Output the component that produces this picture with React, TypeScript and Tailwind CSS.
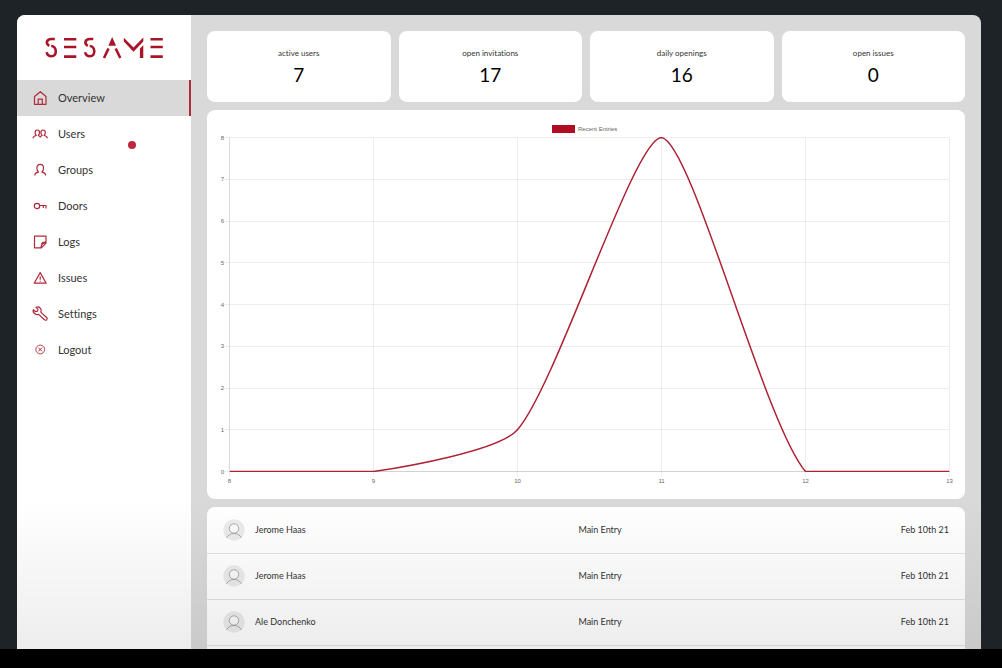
import React from "react";

const RED = "#a91427";

function Icon({ children }: { children: React.ReactNode }) {
  return (
    <svg
      viewBox="0 0 16 16"
      className="h-4 w-4 shrink-0 overflow-visible"
      fill="none"
      stroke="#b02a3a"
      strokeWidth="1.2"
      strokeLinejoin="round"
      aria-hidden="true"
    >
      {children}
    </svg>
  );
}

const navItems: { label: string; icon: React.ReactNode }[] = [
  {
    label: "Overview",
    icon: <path d="M2.500 14.300V6.500L8.300 1.700l5.700 4.800v7.800h-3.700V9.200H6.200v5.100zM6.200 14.300h4.100" />,
  },
  {
    label: "Users",
    icon: (
      <path d="M1 12.200c.1-1.700 1-2.200 3.300-2.700-.9-1.100-1.200-2-1.200-3.100 0-1.600.9-2.400 2.200-2.400s2.200.8 2.200 2.400c0 1.100-.3 2-1.200 3.100.9.300 1.500.8 1.900 1.600.4-.8 1-1.300 1.900-1.600-.9-1.100-1.200-2-1.200-3.100 0-1.600.9-2.400 2.200-2.400s2.200.8 2.200 2.400c0 1.100-.3 2-1.200 3.100 2.300.5 3.200 1 3.300 2.700" />
    ),
  },
  {
    label: "Groups",
    icon: (
      <path d="M2.800 13.400c0-2 1-2.700 3.700-3.200-1.200-1.200-1.600-2.600-1.600-4.200 0-2.400 1.400-3.700 3.300-3.700s3.300 1.300 3.300 3.700c0 1.600-.4 3-1.600 4.200 2.700.5 3.700 1.200 3.700 3.200" />
    ),
  },
  {
    label: "Doors",
    icon: (
      <>
        <circle cx="5" cy="8" r="2.700" />
        <path d="M7.700 7.500H14V10.500M11.300 7.500v2.500" />
      </>
    ),
  },
  {
    label: "Logs",
    icon: <path d="M2.500 2.200H14v7L9.400 13.800H2.500zM14 8.200c-2.600-.2-4.500.6-4.300 2.400M14 8.400c-3 .6-5 2-5 5.200" />,
  },
  {
    label: "Issues",
    icon: <path d="M8.200 2.600 14.200 13.200h-12zM8.200 6.400v3.400M8.200 10.700v1" />,
  },
  {
    label: "Settings",
    icon: (
      <path d="M1.300 3.700 3.600 5.700l1.900-.5.500-1.900L3.900 1.200c1.800-.7 4-.1 4.900 1.700.5 1 .4 2.200 0 3.200l5.800 5.400c.7.700.7 1.700.1 2.300s-1.600.6-2.300-.1L6.600 8.400c-1.200.5-2.600.3-3.700-.6C1.300 6.700.8 5.200 1.300 3.700z" />
    ),
  },
  {
    label: "Logout",
    icon: (
      <>
        <circle cx="8.200" cy="7.500" r="4.400" strokeWidth="0.900" />
        <path d="m6.400 5.700 3.600 3.600m0-3.600L6.400 9.300" strokeWidth="1" />
      </>
    ),
  },
];

function Logo() {
  const s =
    "M9.800 2H6.400C1.400 2 .4 6.800 4.300 8.800M6.200 9C11.900 9 12.600 19.300 6.500 19.300 4 19.300 2.200 18 1.600 15.300";
  return (
    <svg
      viewBox="0 0 118 22"
      className="h-[22px] w-[118px]"
      role="img"
      aria-label="Sesame"
      fill="none"
      stroke={RED}
      strokeWidth="2.600"
    >
      <path d={s} />
      <path d="M19 2.300h12.300M19 10h12.300M19 19.600h12.300" />
      <path d={s} transform="translate(38.500 0)" />
      <path d="M63.500 11.500 59 21M70.700 11.500 75.300 21" />
      <path d="M67.200 0 71 8.700h-7.600z" fill={RED} stroke="none" />
      <path d="M78.800.8V4.600L88.500 14.800 98.300 4.600V.5L88.500 10.600zM94.900 11.600 98.300 8.200V21h-3.400z" fill={RED} stroke="none" />
      <path d="M105.500 2.300h12.300M105.500 10h12.300M105.500 19.600h12.300" />
    </svg>
  );
}

const stats = [
  { label: "active users", value: 7 },
  { label: "open invitations", value: 17 },
  { label: "daily openings", value: 16 },
  { label: "open issues", value: 0 },
];

const hours = [8, 9, 10, 11, 12, 13];
const entries = [0, 0, 1, 8, 0, 0];
const LEFT = 22.5;
const TOP = 27.5;
const BOTTOM = 361.5;
const STEP_X = 144;
const STEP_Y = (BOTTOM - TOP) / 8;
const RIGHT = LEFT + STEP_X * 5;
const TENSION = 0.2;

function curvePath() {
  const pts = entries.map((v, i) => ({ x: LEFT + i * STEP_X, y: BOTTOM - v * STEP_Y }));
  const clamp = (y: number) => Math.min(BOTTOM, Math.max(TOP, y));
  const controls = pts.map((p, i) => {
    const a = pts[i - 1] ?? p;
    const b = pts[i + 1] ?? p;
    const d1 = Math.hypot(p.x - a.x, p.y - a.y);
    const d2 = Math.hypot(b.x - p.x, b.y - p.y);
    const f1 = (TENSION * d1) / (d1 + d2);
    const f2 = (TENSION * d2) / (d1 + d2);
    return {
      inn: [p.x - f1 * (b.x - a.x), clamp(p.y - f1 * (b.y - a.y))],
      out: [p.x + f2 * (b.x - a.x), clamp(p.y + f2 * (b.y - a.y))],
    };
  });
  return pts
    .map((p, i) => (i === 0 ? `M${p.x} ${p.y}` : `C${controls[i - 1].out} ${controls[i].inn} ${p.x} ${p.y}`))
    .join("");
}

function EntriesChart() {
  return (
    <svg viewBox="0 0 758 389" className="block h-auto w-full" role="img" aria-label="Recent Entries">
      <defs>
        <clipPath id="plot">
          <rect x={LEFT} y={TOP - 1} width={RIGHT - LEFT} height={BOTTOM - TOP + 1.5} />
        </clipPath>
      </defs>
      <g stroke="#ededed" strokeWidth="1">
        {Array.from({ length: 9 }, (_, v) => (
          <path key={v} d={`M${LEFT - 5} ${Math.floor(BOTTOM - v * STEP_Y) + 0.5}H${RIGHT}`} />
        ))}
        {hours.map((h, i) => (
          <path key={h} d={`M${LEFT + i * STEP_X} ${TOP}V${BOTTOM + 5}`} />
        ))}
      </g>
      <path d={`M${LEFT} ${TOP}V${BOTTOM}`} stroke="#dadada" />
      <path d={`M${LEFT} ${BOTTOM}H${RIGHT}`} stroke="#d2d2d2" />
      <path d={curvePath()} fill="none" stroke="#ad2335" strokeWidth="1.500" clipPath="url(#plot)" />
      <g fontSize="6" fill="#666" className="font-['Liberation_Sans',sans-serif]">
        {Array.from({ length: 9 }, (_, v) => (
          <text key={v} x="17" y={BOTTOM - v * STEP_Y + 2} textAnchor="end">
            {v}
          </text>
        ))}
        {hours.map((h, i) => (
          <text key={h} x={LEFT + i * STEP_X} y="373" textAnchor="middle">
            {h}
          </text>
        ))}
        <rect x="345" y="15" width="23" height="8" fill="#b00d23" />
        <text x="371" y="21">
          Recent Entries
        </text>
      </g>
    </svg>
  );
}

const log = [
  { name: "Jerome Haas", door: "Main Entry", date: "Feb 10th 21" },
  { name: "Jerome Haas", door: "Main Entry", date: "Feb 10th 21" },
  { name: "Ale Donchenko", door: "Main Entry", date: "Feb 10th 21" },
  { name: "", door: "", date: "" },
];

function Avatar() {
  return (
    <svg
      viewBox="0 0 22 22"
      className="h-[22px] w-[22px] shrink-0"
      fill="none"
      stroke="#999"
      strokeWidth="0.800"
      aria-hidden="true"
    >
      <circle cx="11" cy="11" r="10.700" fill="#ebebeb" stroke="none" />
      <circle cx="11" cy="9.500" r="4.700" fill="#fafafa" />
      <path d="M3.500 18.800c1.500-2.500 4.200-4.400 7.500-4.400s6 1.900 7.500 4.400" />
    </svg>
  );
}

export default function App() {
  return (
    <div className="flex h-screen flex-col bg-black font-[Lato,sans-serif] text-[#333] [font-variant-ligatures:none]">
      <div className="flex min-h-0 flex-1 bg-[#1e2327] pt-[15px] pr-[21px] pl-[17px]">
        <div className="relative flex min-w-0 flex-1 overflow-hidden rounded-t-lg bg-[#d9d9d9]">
          <aside className="w-[174px] shrink-0 bg-white">
            <div className="flex h-[65px] items-center justify-center">
              <Logo />
            </div>
            <nav>
              {navItems.map((item, i) => (
                <a
                  key={item.label}
                  href={`#${item.label.toLowerCase()}`}
                  aria-current={i === 0 ? "page" : undefined}
                  className={
                    i === 0
                      ? "flex h-9 items-center gap-[10px] border-r-2 border-[#b02a3a] bg-[#d9d9d9] pl-[15px] text-[11px]"
                      : "flex h-9 items-center gap-[10px] pl-[15px] text-[11px]"
                  }
                >
                  <Icon>{item.icon}</Icon>
                  {item.label}
                </a>
              ))}
            </nav>
          </aside>

          <main className="flex min-w-0 flex-1 flex-col gap-2 px-4 pt-4">
            <section className="grid shrink-0 grid-cols-4 gap-2">
              {stats.map((s) => (
                <div
                  key={s.label}
                  className="flex h-[71px] flex-col items-center justify-center gap-1 rounded-lg bg-white"
                >
                  <span className="text-[8px] leading-3">{s.label}</span>
                  <span className="text-[19px] leading-6 text-black">{s.value}</span>
                </div>
              ))}
            </section>

            <section className="shrink-0 rounded-lg bg-white">
              <EntriesChart />
            </section>

            <section className="shrink-0 overflow-hidden rounded-t-lg bg-white">
              <table className="w-full table-fixed text-left text-[9px]">
                <tbody>
                  {log.map((row, i) => (
                    <tr key={i} className="h-[46px] border-b border-[#e2e2e2]">
                      <td className="w-[49%] pl-4">
                        {row.name && (
                          <div className="flex items-center gap-[10px]">
                            <Avatar />
                            {row.name}
                          </div>
                        )}
                      </td>
                      <td>{row.door}</td>
                      <td className="pr-4 text-right">{row.date}</td>
                    </tr>
                  ))}
                </tbody>
              </table>
            </section>
          </main>

          <div className="pointer-events-none absolute inset-x-0 bottom-0 h-[150px] bg-linear-to-b from-black/0 to-black/7" />
          <div className="pointer-events-none absolute top-[126px] left-[111px] h-2 w-2 rounded-full bg-[#c0283d]" />
        </div>
      </div>
      <div className="h-[19px] shrink-0 bg-black" />
    </div>
  );
}
